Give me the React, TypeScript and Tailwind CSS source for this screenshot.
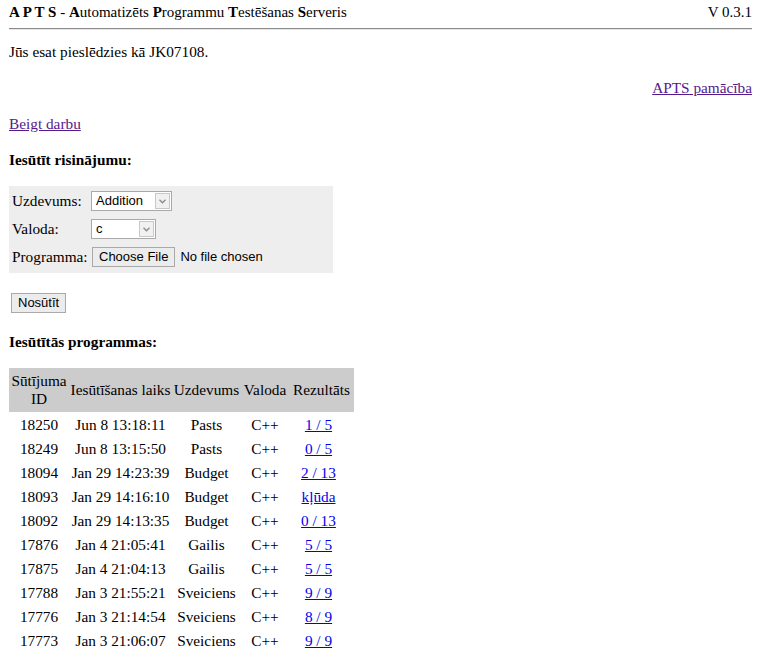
import React from 'react'

const rows = [
  ['18250', 'Jun 8 13:18:11', 'Pasts', 'C++', '1 / 5'],
  ['18249', 'Jun 8 13:15:50', 'Pasts', 'C++', '0 / 5'],
  ['18094', 'Jan 29 14:23:39', 'Budget', 'C++', '2 / 13'],
  ['18093', 'Jan 29 14:16:10', 'Budget', 'C++', 'kļūda'],
  ['18092', 'Jan 29 14:13:35', 'Budget', 'C++', '0 / 13'],
  ['17876', 'Jan 4 21:05:41', 'Gailis', 'C++', '5 / 5'],
  ['17875', 'Jan 4 21:04:13', 'Gailis', 'C++', '5 / 5'],
  ['17788', 'Jan 3 21:55:21', 'Sveiciens', 'C++', '9 / 9'],
  ['17776', 'Jan 3 21:14:54', 'Sveiciens', 'C++', '8 / 9'],
  ['17773', 'Jan 3 21:06:07', 'Sveiciens', 'C++', '9 / 9'],
]

function FakeSelect({ value, width }: { value: string; width: string }) {
  return (
    <div className={`flex h-[20px] items-stretch border border-[#a9a9a9] bg-white ${width}`}>
      <span className="flex-1 pl-[4px] text-[13px] leading-[18px] font-['Liberation_Sans',Arial,sans-serif] text-black">
        {value}
      </span>
      <span className="m-[1px] flex w-[15px] items-center justify-center border border-[#c8c8c8] bg-[#f1f1f1]">
        <svg width="7" height="5" viewBox="0 0 7 5">
          <path d="M0.5 0.8 L3.5 3.8 L6.5 0.8" fill="none" stroke="#8a8a8a" strokeWidth="1.3" />
        </svg>
      </span>
    </div>
  )
}

function GrayButton({ label, className = '' }: { label: string; className?: string }) {
  return (
    <span
      className={`inline-flex h-[20px] items-center border border-[#a9a9a9] bg-[#ececec] px-[6px] text-[13px] text-black font-['Liberation_Sans',Arial,sans-serif] ${className}`}
    >
      {label}
    </span>
  )
}

export default function App() {
  return (
    <div className="min-h-screen bg-white px-[9px] pt-[3px] text-black font-['Liberation_Serif','Times_New_Roman',serif] text-[15.3px] leading-[18px]">
      {/* Header */}
      <div className="flex h-[18px] items-center justify-between text-[15px]">
        <span>
          <b>A P T S</b> - <b>A</b>utomatizēts <b>P</b>rogrammu <b>T</b>estēšanas <b>S</b>erveris
        </span>
        <span>V 0.3.1</span>
      </div>
      <div className="mt-[7px] border-t border-b border-t-[#8c8c8c] border-b-[#e6e6e6]" />

      <p className="mt-[13px]">Jūs esat pieslēdzies kā JK07108.</p>

      <div className="mt-[18px] flex justify-end">
        <a href="#" className="text-[#551a8b] underline">APTS pamācība</a>
      </div>

      <div className="mt-[18px]">
        <a href="#" className="text-[#551a8b] underline">Beigt darbu</a>
      </div>

      <h3 className="mt-[18px] font-bold">Iesūtīt risinājumu:</h3>

      {/* Upload form */}
      <div className="mt-[17px] w-[324px] bg-[#eeeeee] pt-[1px] pb-[2px]">
        <div className="flex h-[28px] items-center">
          <span className="w-[82px] pl-[3px]">Uzdevums:</span>
          <FakeSelect value="Addition" width="w-[81px]" />
        </div>
        <div className="flex h-[28px] items-center">
          <span className="w-[82px] pl-[3px]">Valoda:</span>
          <FakeSelect value="c" width="w-[65px]" />
        </div>
        <div className="flex h-[28px] items-center">
          <span className="w-[83px] pl-[3px]">Programma:</span>
          <GrayButton label="Choose File" />
          <span className="ml-[5px] text-[13px] font-['Liberation_Sans',Arial,sans-serif]">No file chosen</span>
        </div>
      </div>

      <div className="mt-[20px] pl-[2px]">
        <GrayButton label="Nosūtīt" className="px-[6px]" />
      </div>

      <h3 className="mt-[20px] font-bold">Iesūtītās programmas:</h3>

      {/* Submissions table */}
      <table className="mt-[17px] w-[345px] table-fixed border-collapse text-center whitespace-nowrap">
        <thead>
          <tr className="h-[44px] bg-[#cccccc]">
            <th className="w-[60px] p-0 font-normal">Sūtījuma<br />ID</th>
            <th className="w-[103px] p-0 font-normal">Iesūtīšanas laiks</th>
            <th className="w-[69px] p-0 font-normal">Uzdevums</th>
            <th className="w-[48px] p-0 font-normal">Valoda</th>
            <th className="w-[65px] p-0 font-normal">Rezultāts</th>
          </tr>
        </thead>
        <tbody>
          {rows.map(r => (
            <tr key={r[0]} className="h-[24px]">
              <td className="pt-[1px]">{r[0]}</td>
              <td className="pt-[1px]">{r[1]}</td>
              <td className="pt-[1px]">{r[2]}</td>
              <td className="pt-[1px]">{r[3]}</td>
              <td className="pt-[1px] pr-[6px]">
                <a href="#" className="text-[#0000ee] underline">{r[4]}</a>
              </td>
            </tr>
          ))}
        </tbody>
      </table>
    </div>
  )
}
